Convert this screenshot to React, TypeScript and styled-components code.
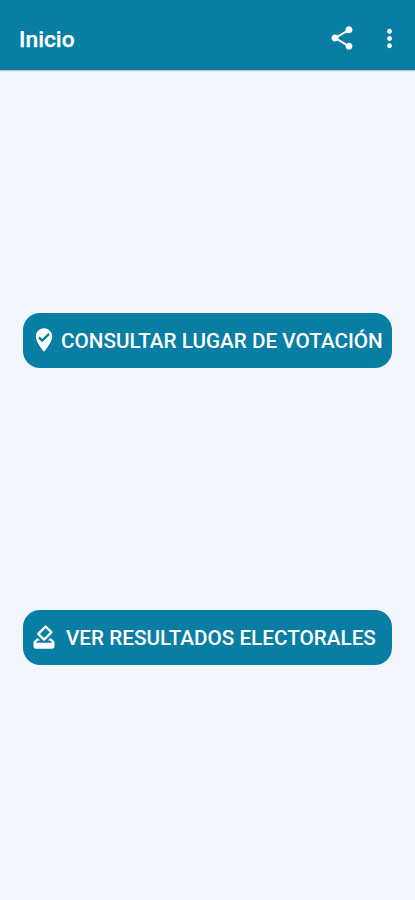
import React from 'react';
import styled, { createGlobalStyle } from 'styled-components';
import { MdShare, MdMoreVert, MdWhereToVote, MdHowToVote } from 'react-icons/md';

const GlobalStyle = createGlobalStyle`
  * { box-sizing: border-box; }
  body { margin: 0; background: #f3f6ff; font-family: Roboto, sans-serif; }
`;

const Screen = styled.div`
  width: 100%;
  height: 900px;
  display: flex;
  flex-direction: column;
  background: #f3f6ff;
  overflow: hidden;
`;

const AppBar = styled.header`
  flex: none;
  height: 70px;
  padding: 6px 11px 0 19px;
  display: flex;
  align-items: center;
  background: #087ea4;
  color: #fff;
  box-shadow: 0 1px 1px rgba(0, 40, 60, 0.25);
`;

const Title = styled.h1`
  margin: 0;
  padding-top: 4px;
  flex: 1;
  font-size: 22.8px;
  font-weight: 500;
  line-height: 28px;
  -webkit-text-stroke: 0.25px currentColor;
`;

const IconButton = styled.button<{ $gap?: number }>`
  display: flex;
  margin: 0 ${(p) => p.$gap ?? 0}px 0 0;
  padding: 0;
  border: 0;
  background: none;
  color: inherit;
`;

const Actions = styled.main`
  display: flex;
  flex-direction: column;
  gap: 242px;
  padding: 243px 23px 0;
`;

const ActionButton = styled.button<{ $gap: number }>`
  height: 55px;
  padding: 0 0 0 7px;
  display: flex;
  align-items: center;
  gap: ${(p) => p.$gap}px;
  border: 0;
  border-radius: 17px;
  background: #087ea4;
  color: #fff;
  font: 500 20.7px/28px Roboto, sans-serif;
  white-space: nowrap;

  svg {
    flex: none;
    margin-bottom: 1px;
  }
`;

const Label = styled.span`
  padding-top: 1px;
`;

export default function App() {
  return (
    <Screen>
      <GlobalStyle />
      <AppBar>
        <Title>Inicio</Title>
        <IconButton $gap={19} aria-label="Compartir"><MdShare size={28} /></IconButton>
        <IconButton aria-label="Más opciones"><MdMoreVert size={29} /></IconButton>
      </AppBar>
      <Actions>
        <ActionButton $gap={3}>
          <MdWhereToVote size={28} />
          <Label>CONSULTAR LUGAR DE VOTACIÓN</Label>
        </ActionButton>
        <ActionButton $gap={8}>
          <MdHowToVote size={28} />
          <Label>VER RESULTADOS ELECTORALES</Label>
        </ActionButton>
      </Actions>
    </Screen>
  );
}
